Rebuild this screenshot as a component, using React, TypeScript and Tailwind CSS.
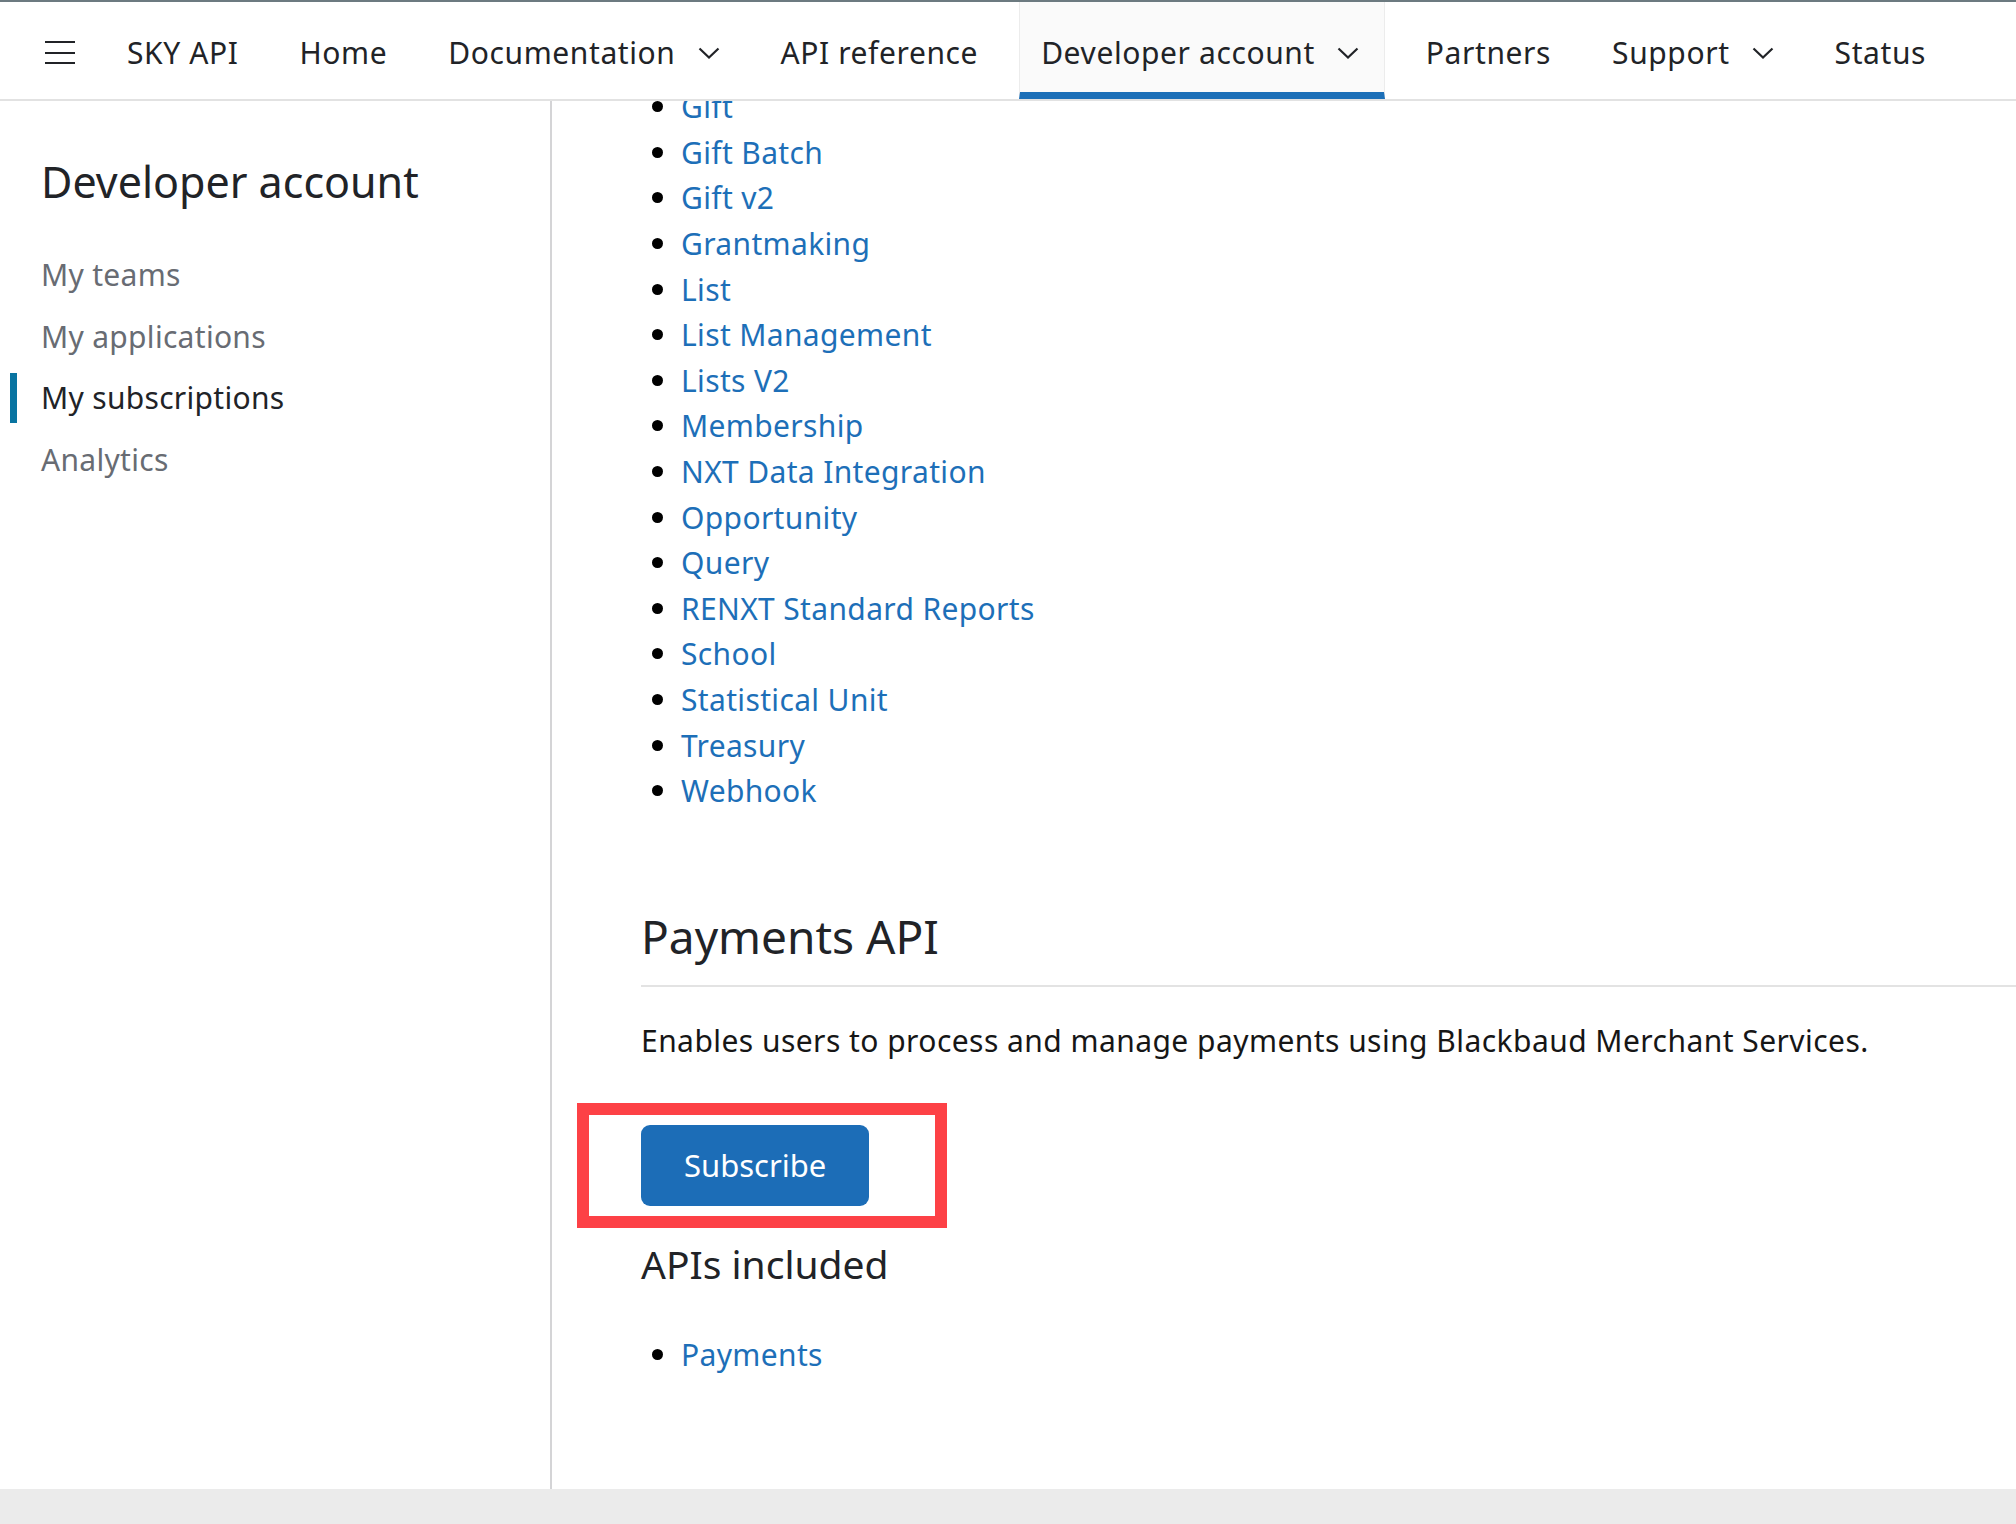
import React from "react";

const apis = [
  "Gift",
  "Gift Batch",
  "Gift v2",
  "Grantmaking",
  "List",
  "List Management",
  "Lists V2",
  "Membership",
  "NXT Data Integration",
  "Opportunity",
  "Query",
  "RENXT Standard Reports",
  "School",
  "Statistical Unit",
  "Treasury",
  "Webhook",
];

const sideLinks = ["My teams", "My applications", "My subscriptions", "Analytics"];

const Chevron = () => (
  <svg width="22" height="12" viewBox="0 0 22 12" fill="none" className="ml-[22px]">
    <polyline points="1.5,1.5 11,10.5 20.5,1.5" stroke="#212327" strokeWidth="2.2" />
  </svg>
);

const NavItem = ({ label, menu }: { label: string; menu?: boolean }) => (
  <a href="#" className="flex items-center px-[20px] pt-[4px] text-[#212327]">
    {label}
    {menu && <Chevron />}
  </a>
);

const Bullet = ({ label }: { label: string }) => (
  <li className="flex h-[45.6px] items-center pl-[11px]">
    <span className="h-[11px] w-[11px] rounded-full bg-black" />
    <a href="#" className="ml-[18px] text-[#1d6fb8]">
      {label}
    </a>
  </li>
);

const App = () => {
  return (
    <div className="flex h-[1524px] flex-col overflow-hidden bg-white font-['Noto_Sans',sans-serif]">
      {/* top nav */}
      <header className="flex h-[101px] shrink-0 border-t-2 border-b-2 border-t-[#6c7a80] border-b-[#e2e2e2] text-[30px] tracking-[0.6px]">
        <button className="ml-[45px] mr-[32px] flex w-[30px] flex-col justify-center gap-[8.5px] pt-[4px]">
          <span className="h-[2px] w-full bg-[#212327]" />
          <span className="h-[2px] w-full bg-[#212327]" />
          <span className="h-[2px] w-full bg-[#212327]" />
        </button>
        <nav className="flex items-stretch gap-[21px]">
          <NavItem label="SKY API" />
          <NavItem label="Home" />
          <NavItem label="Documentation" menu />
          <NavItem label="API reference" />
          <a
            href="#"
            className="flex items-center border-x border-b-[7px] border-x-[#ececec] border-b-[#1c6fb8] bg-[#fafafa] pl-[21px] pr-[25px] pt-[11px] text-[#212327]"
          >
            Developer account
            <Chevron />
          </a>
          <NavItem label="Partners" />
          <NavItem label="Support" menu />
          <NavItem label="Status" />
        </nav>
      </header>

      <div className="flex h-[1388px] shrink-0">
        {/* sidebar */}
        <aside className="w-[552px] shrink-0 border-r-2 border-[#d4d4d6] pt-[55px]">
          <h1 className="pl-[41px] text-[43px] leading-[52px] text-[#212327]">Developer account</h1>
          <div className="mt-[36px] flex flex-col">
            {sideLinks.map((l) => {
              const active = l === "My subscriptions";
              return (
                <a
                  key={l}
                  href="#"
                  className={
                    "relative pl-[41px] text-[30px] leading-[61.5px] tracking-[0.3px] " +
                    (active ? "text-[#212327]" : "text-[#686c73]")
                  }
                >
                  {active && <span className="absolute bottom-[6px] left-[10px] top-[6px] w-[7px] bg-[#0974a1]" />}
                  {l}
                </a>
              );
            })}
          </div>
        </aside>

        {/* content */}
        <main className="min-w-0 flex-1 overflow-hidden pl-[89px] text-[30px]">
          <ul className="-mt-[17px] tracking-[0.35px]">
            {apis.map((a) => (
              <Bullet key={a} label={a} />
            ))}
          </ul>

          <h2 className="mt-[95px] border-b-2 border-[#e3e3e3] pb-[21px] text-[46px] leading-[55px] text-[#212327]">
            Payments API
          </h2>
          <p className="mt-[31px] leading-[45.6px] tracking-[0.45px] text-[#161616]">
            Enables users to process and manage payments using Blackbaud Merchant Services.
          </p>

          <div className="relative mt-[62px] inline-block">
            <button className="h-[81px] rounded-[9px] bg-[#1c6db7] px-[43px] text-[31px] text-white">
              Subscribe
            </button>
            {/* highlight box */}
            <span className="pointer-events-none absolute -left-[64px] -top-[22px] h-[125px] w-[370px] border-[12px] border-[#fd4146]" />
          </div>

          <h3 className="mt-[34px] text-[39px] leading-[47px] text-[#212327]">APIs included</h3>
          <ul className="mt-[45px] tracking-[0.35px]">
            <Bullet label="Payments" />
          </ul>
        </main>
      </div>

      <div className="h-[35px] shrink-0 bg-[#ebebeb]" />
    </div>
  );
};

export default App;
